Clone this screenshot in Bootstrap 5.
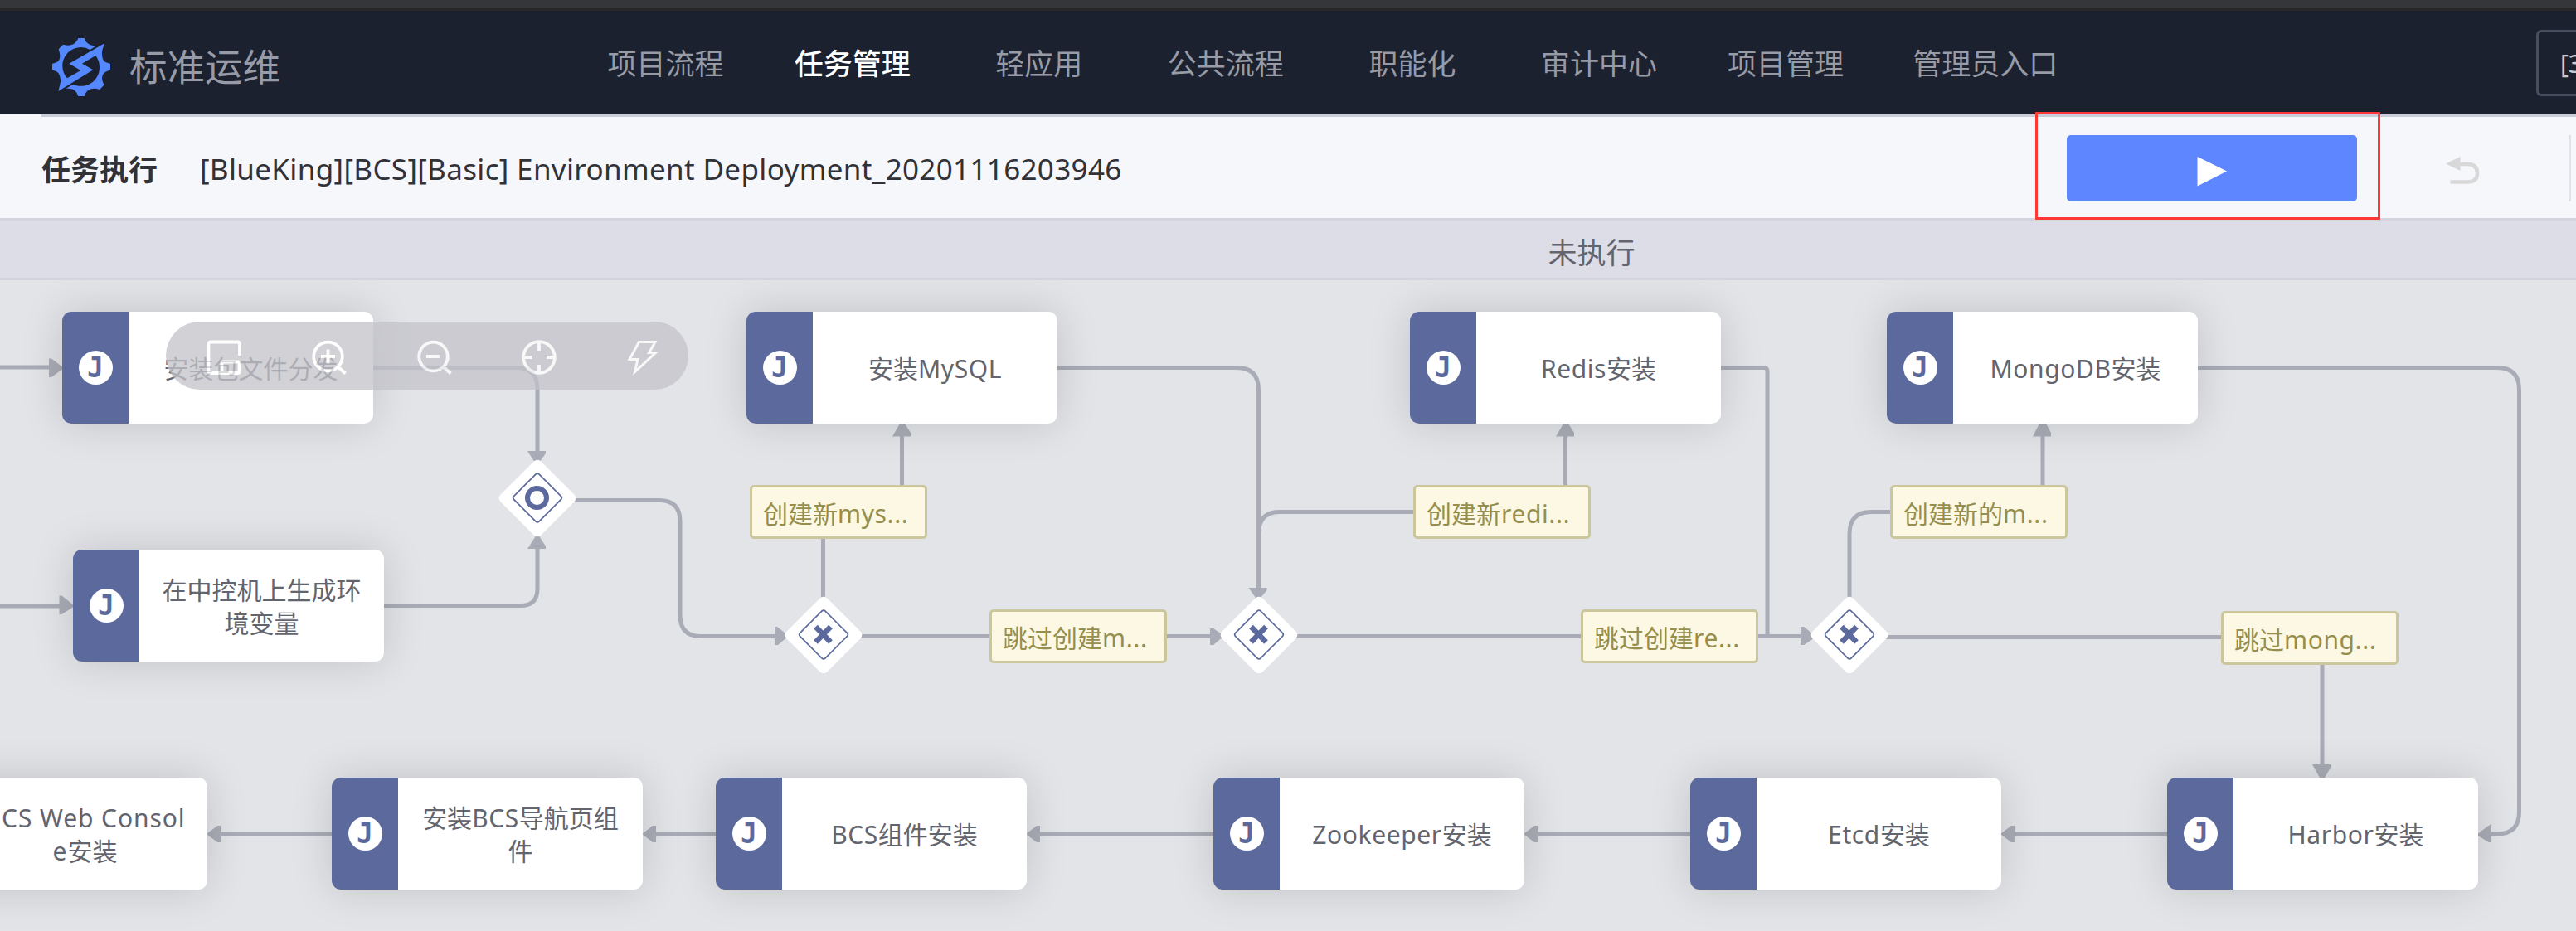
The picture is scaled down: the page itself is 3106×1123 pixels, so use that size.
<!DOCTYPE html>
<html lang="zh-CN">
<head>
<meta charset="utf-8">
<meta name="viewport" content="width=device-width, initial-scale=1">
<title>标准运维 - 任务执行</title>
<link rel="stylesheet" href="https://cdn.jsdelivr.net/npm/bootstrap@5.3.0/dist/css/bootstrap.min.css">
<style>
  body { font-family: "Noto Sans", "Noto Sans CJK SC", sans-serif; height: 1123px; background: #e2e4e8; color: #63656e; }
  .browser-edge { height: 13px; background: #35363a; border-bottom: 3px solid #282828; }
  .top-nav { height: 125px; background: #1c2130; padding: 0; }
  .brand-area { width: 690px; padding-left: 63px; padding-top: 10px; gap: 23px; color: #979ba8; font-size: 45.5px; line-height: 1; }
  .brand-area svg { width: 70px; height: 70px; }
  .menu-item { width: 225.1px; padding: 0; text-align: center; font-size: 35px; line-height: 1; color: #979ba5; }
  .menu-item.wide { width: 256px; }
  .menu-item.active { color: #fff; font-weight: 500; }
  .top-nav .nav { margin-top: 1px; }
  .project-select { margin-left: auto; width: 48px; height: 80px; border: 3px solid #474e5e; border-right: 0; border-radius: 6px 0 0 6px; padding-left: 26px; padding-top: 2px; font-size: 30px; color: #c9ccd6; }
  .task-bar { height: 128px; background: #f5f7fb; border-bottom: 3px solid #d3d4de; }
  .task-bar .rule-line { height: 3px; margin-left: 50px; background: #c9cdda; }
  .task-row { height: 122px; padding-left: 50px; }
  .task-kind { font-size: 35px; line-height: 1; font-weight: 700; color: #313238; width: 191px; padding-top: 4px; }
  .task-title { font-size: 35px; line-height: 1; color: #313238; letter-spacing: .34px; white-space: nowrap; padding-top: 3px; }
  .run-frame { width: 416px; height: 130px; border: 3px solid #ff3737; padding: 25px 25px 0 35px; margin-top: -4px; }
  .run-btn { width: 350px; height: 80px; border-radius: 5px; background: #5e87ff; border: 0; padding: 0; }
  .run-btn:hover { background: #5e87ff; }
  .undo-icon { margin-left: 79px; width: 42px; height: 36px; margin-top: 7px; }
  .bar-divider { width: 3px; height: 80px; background: #dfe2e8; margin-left: 106px; margin-right: 6px; margin-top: 1px; }
  .status-strip { height: 72px; background: #dcdde6; border-bottom: 3px solid #d3d4de; }
  .status-strip div { width: 3838px; text-align: center; font-size: 35px; line-height: 78px; color: #63656e; }
  .flow { position: relative; height: 785px; overflow: hidden; background: #e2e4e8; }
  .flow .wires { position: absolute; left: 0; top: 0; width: 3106px; height: 785px; }
  .step { position: absolute; width: 375px; height: 135px; border-radius: 11px; background: #fff; box-shadow: 0 0 50px rgba(0,0,0,.15); overflow: visible; }
  .step .side { width: 80px; flex: none; background: #5c699d; border-radius: 11px 0 0 11px; }
  .step .disc { width: 41px; height: 41px; border-radius: 50%; background: #fff; color: #5c699d; font: 700 33px/41px "DejaVu Sans Mono", monospace; text-align: center; }
  .step .caption { font-size: 30px; line-height: 40px; text-align: center; padding-top: 3px; white-space: nowrap; }
  .cond { position: absolute; width: 214px; height: 65px; border: 3px solid #cbc69b; border-radius: 5px; background: #fcf8e3; color: #968e4d; font-size: 30px; line-height: 64px; padding-left: 13px; white-space: nowrap; }
  .gate { position: absolute; width: 94px; height: 94px; }
  .tools { position: absolute; left: 200px; top: 50px; width: 630px; height: 82px; border-radius: 41px; background: #c4c4ca; opacity: .76; padding: 4px 31px 0 49px; }
  .tools svg { width: 43px; height: 43px; fill: none; stroke: #fff; stroke-width: 3.8; }
  .en { letter-spacing: .6px; }
  #s6 .en { letter-spacing: .9px; }
  #s1 { left: 75px; top: 38px; } #s2 { left: 88px; top: 325px; }
  #s3 { left: 900px; top: 38px; } #s4 { left: 1700px; top: 38px; } #s5 { left: 2275px; top: 38px; }
  #s6 { left: -125px; top: 600px; } #s7 { left: 400px; top: 600px; } #s8 { left: 863px; top: 600px; }
  #s9 { left: 1463px; top: 600px; } #s10 { left: 2038px; top: 600px; } #s11 { left: 2613px; top: 600px; }
  #c1 { left: 904px; top: 247px; } #c2 { left: 1193px; top: 397px; } #c3 { left: 1704px; top: 247px; }
  #c4 { left: 1906px; top: 397px; } #c5 { left: 2279px; top: 247px; } #c6 { left: 2678px; top: 399px; }
  #g1 { left: 601px; top: 216px; } #g2 { left: 946px; top: 381px; } #g3 { left: 1471px; top: 381px; } #g4 { left: 2183px; top: 381px; }
</style>
</head>
<body class="overflow-hidden m-0">
<div class="browser-edge"></div>
<header class="top-nav navbar flex-nowrap align-items-center justify-content-start">
  <div class="brand-area d-flex align-items-center flex-shrink-0">
    <svg viewBox="69 45 210 210" fill="#5588ff"><path d="M91 237L100 200C97 184 95 171 84 166L69 160V138L84 133C97 127 101 112 92 85L108 68C135 76 154 68 163 45H185C192 66 208 73 228 73L206 87A67 67 0 0 0 123 190L172 162L130 137L258 64C252 82 249 90 249 99C249 118 254 128 264 133L279 138V160L265 166C248 173 244 192 257 214L241 231C214 222 193 230 185 255H163C155 232 142 225 118 228L144 212A67 67 0 0 0 240 150Q240 127 226 108L177 137L217 160Z"/></svg>
    <span>标准运维</span>
  </div>
  <nav class="nav flex-nowrap flex-shrink-0">
    <a class="nav-link menu-item">项目流程</a>
    <a class="nav-link menu-item active">任务管理</a>
    <a class="nav-link menu-item">轻应用</a>
    <a class="nav-link menu-item">公共流程</a>
    <a class="nav-link menu-item">职能化</a>
    <a class="nav-link menu-item">审计中心</a>
    <a class="nav-link menu-item">项目管理</a>
    <a class="nav-link menu-item wide">管理员入口</a>
  </nav>
  <div class="project-select d-flex align-items-center overflow-hidden">[3</div>
</header>

<section class="task-bar">
  <div class="rule-line"></div>
  <div class="task-row d-flex align-items-center">
    <div class="task-kind">任务执行</div>
    <div class="task-title">[BlueKing][BCS][Basic] Environment Deployment_20201116203946</div>
    <div class="run-frame ms-auto flex-shrink-0 position-relative z-1">
      <button class="run-btn btn d-flex align-items-center justify-content-center" aria-label="run">
        <svg width="36" height="36" viewBox="0 0 36 36" class="mt-2"><path d="M.5 0L36 17.500L.5 35.500Z" fill="#fff"/></svg>
      </button>
    </div>
    <svg class="undo-icon flex-shrink-0" viewBox="0 0 42 36"><path d="M0 9.500L17.500 1V18Z" fill="#d8d8d8"/><path d="M15 10H26C34 10 38 14 38 21S34 31.500 26 31.500H5.500" fill="none" stroke="#d8d8d8" stroke-width="4.600"/></svg>
    <div class="bar-divider flex-shrink-0"></div>
  </div>
</section>

<section class="status-strip overflow-hidden"><div>未执行</div></section>

<main class="flow">
  <svg class="wires" viewBox="0 338 3106 785">
    <g fill="none" stroke="#a9acb6" stroke-width="5">
      <path d="M0 443H62M0 731H75"/>
      <path d="M450 443.500H623Q648 443.500 648 469V548"/>
      <path d="M463 730.500H628Q648 730.500 648 710V658"/>
      <path d="M690 603.500H795Q820 603.500 820 629V742Q820 767.500 845 767.500H938"/>
      <path d="M992.500 725V645M1087.500 590V522"/>
      <path d="M1275 443.500H1491Q1517.500 443.500 1517.500 470V712"/>
      <path d="M1035 767.500H1462M1560 767.500H2174"/>
      <path d="M1706 617.500H1543Q1517.500 617.500 1517.500 644"/>
      <path d="M1887.500 590V522M2075 443.500H2127Q2131 443.500 2131 448V767"/>
      <path d="M2230 725V644Q2230 617.500 2256 617.500H2282M2463 590V522"/>
      <path d="M2270 768.500H2680M2800 798V925"/>
      <path d="M2650 443.500H3011Q3037.500 443.500 3037.500 470V979Q3037.500 1006 3011 1006H3000"/>
      <path d="M2613 1006H2425M2038 1006H1850M1463 1006H1250M863 1006H787M400 1006H262"/>
    </g>
    <g fill="#a9acb6">
      <path d="M59 432.500H62L77 444L62 455H59ZM71.500 718.500H74.500L90 731L74.500 741H71.500Z"/>
      <path d="M636 544H658V547L650 558H645ZM636 662H658V659L649 645H647Z"/>
      <path d="M934 756H937L951 767L938 778H934ZM1459 758H1463L1476 767L1463 778H1459ZM2171 756H2175L2190 768L2175 778H2171Z"/>
      <path d="M1505.500 709H1527.500V712L1520 721H1514Z"/>
      <path d="M1076 526.500H1098V522L1091 511H1085ZM1876 526.500H1898V522L1891 511H1885ZM2451 526.500H2473V522L2467 511H2459Z"/>
      <path d="M2788 922H2810V926L2803 938H2797Z"/>
      <path d="M3004 994V1016H3001L2986 1007L2999 997Z"/>
      <path id="la" d="M2429 996V1016H2425L2412 1006L2425 996Z"/>
      <use href="#la" x="-575"/><use href="#la" x="-1175"/><use href="#la" x="-1638"/><use href="#la" x="-2163"/>
    </g>
  </svg>

  <div class="step d-flex" id="s1"><div class="side d-flex align-items-center justify-content-center"><div class="disc">J</div></div><div class="caption flex-fill align-self-center">安装包文件分发</div></div>
  <div class="step d-flex" id="s2"><div class="side d-flex align-items-center justify-content-center"><div class="disc">J</div></div><div class="caption flex-fill align-self-center">在中控机上生成环<br>境变量</div></div>
  <div class="step d-flex" id="s3"><div class="side d-flex align-items-center justify-content-center"><div class="disc">J</div></div><div class="caption flex-fill align-self-center">安装<span class="en">MySQL</span></div></div>
  <div class="step d-flex" id="s4"><div class="side d-flex align-items-center justify-content-center"><div class="disc">J</div></div><div class="caption flex-fill align-self-center"><span class="en">Redis</span>安装</div></div>
  <div class="step d-flex" id="s5"><div class="side d-flex align-items-center justify-content-center"><div class="disc">J</div></div><div class="caption flex-fill align-self-center"><span class="en">MongoDB</span>安装</div></div>
  <div class="step d-flex" id="s6"><div class="side d-flex align-items-center justify-content-center"><div class="disc">J</div></div><div class="caption flex-fill align-self-center"><span class="en">BCS Web Consol</span><br><span class="en">e</span>安装</div></div>
  <div class="step d-flex" id="s7"><div class="side d-flex align-items-center justify-content-center"><div class="disc">J</div></div><div class="caption flex-fill align-self-center">安装<span class="en">BCS</span>导航页组<br>件</div></div>
  <div class="step d-flex" id="s8"><div class="side d-flex align-items-center justify-content-center"><div class="disc">J</div></div><div class="caption flex-fill align-self-center"><span class="en">BCS</span>组件安装</div></div>
  <div class="step d-flex" id="s9"><div class="side d-flex align-items-center justify-content-center"><div class="disc">J</div></div><div class="caption flex-fill align-self-center"><span class="en">Zookeeper</span>安装</div></div>
  <div class="step d-flex" id="s10"><div class="side d-flex align-items-center justify-content-center"><div class="disc">J</div></div><div class="caption flex-fill align-self-center"><span class="en">Etcd</span>安装</div></div>
  <div class="step d-flex" id="s11"><div class="side d-flex align-items-center justify-content-center"><div class="disc">J</div></div><div class="caption flex-fill align-self-center"><span class="en">Harbor</span>安装</div></div>

  <div class="cond" id="c1">创建新<span class="en">mys...</span></div>
  <div class="cond" id="c2">跳过创建<span class="en">m...</span></div>
  <div class="cond" id="c3">创建新<span class="en">redi...</span></div>
  <div class="cond" id="c4">跳过创建<span class="en">re...</span></div>
  <div class="cond" id="c5">创建新的<span class="en">m...</span></div>
  <div class="cond" id="c6">跳过<span class="en">mong...</span></div>

  <svg class="gate" id="g1" viewBox="0 0 94 94"><rect x="12.500" y="12.500" width="69" height="69" rx="6" transform="rotate(45 47 47)" fill="#fff"/><rect x="25.500" y="25" width="43" height="43" rx="3" transform="rotate(45 47 46.500)" fill="none" stroke="#5c699d" stroke-width="1.700"/><circle cx="46.500" cy="46.500" r="11.500" fill="none" stroke="#5c699d" stroke-width="6"/></svg>
  <svg class="gate" id="g2" viewBox="0 0 94 94"><g id="xg"><rect x="12.500" y="12.500" width="69" height="69" rx="6" transform="rotate(45 47 47)" fill="#fff"/><rect x="25.500" y="25" width="43" height="43" rx="3" transform="rotate(45 47 46.500)" fill="none" stroke="#5c699d" stroke-width="1.700"/><path d="M37.500 37L55.500 55.500M55.500 37L37.500 55.500" stroke="#5c699d" stroke-width="6.500"/></g></svg>
  <svg class="gate" id="g3" viewBox="0 0 94 94"><use href="#xg"/></svg>
  <svg class="gate" id="g4" viewBox="0 0 94 94"><use href="#xg"/></svg>

  <div class="tools d-flex align-items-center justify-content-between">
    <svg viewBox="0 0 43 43"><path d="M40 19V5Q40 2.500 37.500 2.500H5Q2.500 2.500 2.500 5V37.500Q2.500 40 5 40H18"/><rect x="18.500" y="26.500" width="21" height="13.500" rx="1.500"/></svg>
    <svg viewBox="0 0 43 43"><circle cx="19.500" cy="20" r="17.300"/><path d="M31.500 32.500L40.500 40.500M19.500 11.500V28.500M11 20H28"/></svg>
    <svg viewBox="0 0 43 43"><circle cx="19.500" cy="20" r="17.300"/><path d="M31.500 32.500L40.500 40.500M11 20H28"/></svg>
    <svg viewBox="0 0 43 43"><circle cx="21" cy="21" r="18.800"/><path d="M21 2V13M21 30V40M2 21H13M30 21H40"/></svg>
    <svg viewBox="0 0 43 43"><path d="M14.500 2.500H34L26.500 15.500H34.500L9.500 38.500L13 23.500H3Z" stroke-width="3"/></svg>
  </div>
</main>
<script src="https://cdn.jsdelivr.net/npm/bootstrap@5.3.0/dist/js/bootstrap.bundle.min.js"></script>
</body>
</html>
